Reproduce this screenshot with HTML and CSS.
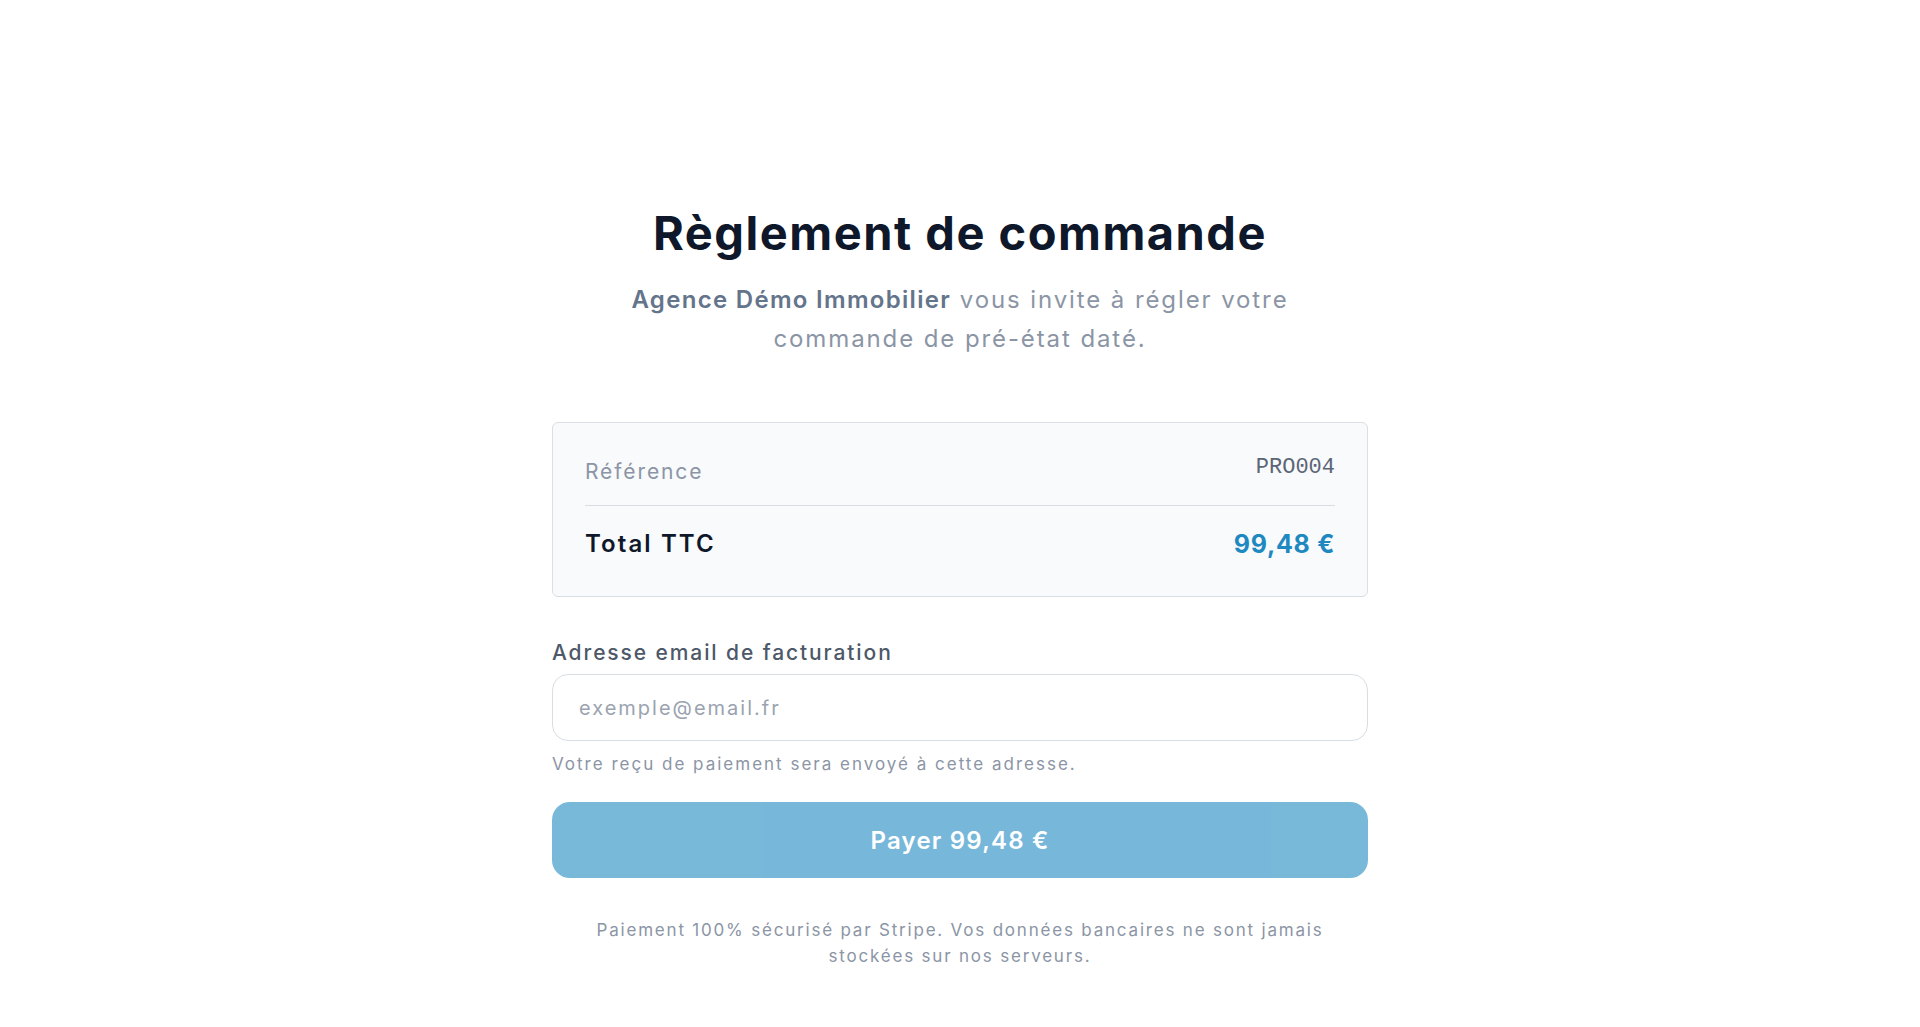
FILE: index.html
```html
<!DOCTYPE html>
<html lang="fr">
<head>
    <meta charset="utf-8">
    <title>Règlement de commande</title>
    <link rel="stylesheet" href="styles.css">
</head>
<body>

    <main class="checkout">
        <header class="intro">
            <h1>Règlement de commande</h1>
            <p><strong>Agence Démo Immobilier</strong> vous invite à régler votre<br>commande de pré-état daté.</p>
        </header>

        <section class="summary">
            <div class="summary-row ref-row">
                <span class="ref-label">Référence</span>
                <span class="ref-value">PRO004</span>
            </div>
            <div class="summary-row total-row">
                <span class="total-label">Total TTC</span>
                <span class="total-value">99,48 €</span>
            </div>
        </section>

        <form id="payForm" class="pay-form" onsubmit="event.preventDefault();">
            <label for="email">Adresse email de facturation</label>
            <input type="email" id="email" name="email" placeholder="exemple@email.fr">
            <p class="hint">Votre reçu de paiement sera envoyé à cette adresse.</p>

            <button type="submit" class="pay-btn" disabled>Payer 99,48 €</button>
        </form>

        <p class="secure-note">Paiement 100% sécurisé par Stripe. Vos données bancaires ne sont jamais stockées sur nos serveurs.</p>
    </main>

</body>
</html>
```

FILE: styles.css
```css
body {
    font-family: Inter, "Noto Sans", sans-serif;
    background-color: #fff;
    color: #0f172a;
    margin: 0;
    padding: 0;
}

.checkout {
    width: 816px;
    margin: 0 auto;
    padding: 204px 0 40px;
}

/* heading + invitation text */
.intro {
    text-align: center;
}

.intro h1 {
    margin: 0;
    font-size: 47px;
    line-height: 58px;
    font-weight: 700;
    letter-spacing: 1.5px;
    color: #0f172a;
}

.intro p {
    margin: 18px auto 0;
    font-size: 24px;
    line-height: 39px;
    letter-spacing: 1.9px;
    color: #8b95a5;
}

.intro strong {
    font-weight: 600;
    letter-spacing: 1.3px;
    color: #64748b;
}

/* order summary box */
.summary {
    margin-top: 64px;
    padding: 32px 32px 32px;
    background-color: #f8fafc;
    border: 1px solid #dadfe5;
    border-radius: 6px;
}

.summary-row {
    display: flex;
    justify-content: space-between;
}

.ref-row {
    align-items: flex-start;
    padding-bottom: 17px;
    border-bottom: 1px solid #d9dde3;
    line-height: 33px;
}

.ref-label {
    font-size: 21px;
    letter-spacing: 1.9px;
    color: #8b95a5;
}

.ref-value {
    font-family: "Liberation Mono", monospace;
    font-size: 22px;
    line-height: 26px;
    color: #5b6575;
}

.total-row {
    align-items: center;
    padding-top: 18px;
    line-height: 40px;
}

.total-label {
    font-size: 24px;
    font-weight: 600;
    letter-spacing: 2.1px;
    color: #0f172a;
}

.total-value {
    font-size: 25px;
    font-weight: 700;
    letter-spacing: 0.7px;
    color: #1e88c0;
}

/* billing email */
.pay-form {
    margin-top: 42px;
}

.pay-form label {
    display: block;
    font-size: 21px;
    line-height: 28px;
    font-weight: 500;
    letter-spacing: 1.9px;
    color: #4d5868;
    margin-bottom: 7px;
}

.pay-form input[type="email"] {
    display: block;
    width: 100%;
    box-sizing: border-box;
    height: 67px;
    padding: 0 26px;
    font-family: inherit;
    font-size: 20px;
    letter-spacing: 2px;
    color: #0f172a;
    border: 1px solid #d9dee4;
    border-radius: 16px;
    outline: none;
}

.pay-form input::placeholder {
    color: #9aa3af;
}

.hint {
    margin: 11px 0 0;
    font-size: 17px;
    line-height: 24px;
    letter-spacing: 2px;
    color: #8b95a5;
}

.pay-btn {
    display: block;
    width: 100%;
    height: 76px;
    margin-top: 26px;
    font-family: inherit;
    font-size: 24px;
    font-weight: 600;
    letter-spacing: 1.2px;
    color: #fff;
    background-color: #1e88c0;
    border: none;
    border-radius: 18px;
    opacity: 0.6;
    cursor: not-allowed;
}

.secure-note {
    max-width: 760px;
    margin: 39px auto 0;
    text-align: center;
    font-size: 17px;
    line-height: 26px;
    letter-spacing: 1.8px;
    color: #8b95a5;
}
```
